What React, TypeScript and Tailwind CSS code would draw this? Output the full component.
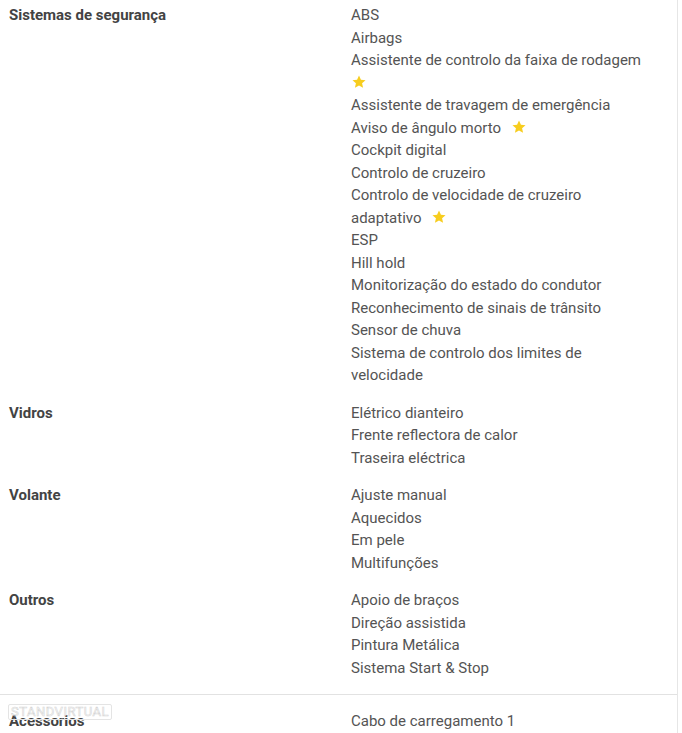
type Item = { text: string; star?: boolean }

const sections: { title: string; items: Item[] }[] = [
  {
    title: 'Sistemas de segurança',
    items: [
      { text: 'ABS' },
      { text: 'Airbags' },
      { text: 'Assistente de controlo da faixa de rodagem', star: true },
      { text: 'Assistente de travagem de emergência' },
      { text: 'Aviso de ângulo morto', star: true },
      { text: 'Cockpit digital' },
      { text: 'Controlo de cruzeiro' },
      { text: 'Controlo de velocidade de cruzeiro adaptativo', star: true },
      { text: 'ESP' },
      { text: 'Hill hold' },
      { text: 'Monitorização do estado do condutor' },
      { text: 'Reconhecimento de sinais de trânsito' },
      { text: 'Sensor de chuva' },
      { text: 'Sistema de controlo dos limites de velocidade' },
    ],
  },
  {
    title: 'Vidros',
    items: [
      { text: 'Elétrico dianteiro' },
      { text: 'Frente reflectora de calor' },
      { text: 'Traseira eléctrica' },
    ],
  },
  {
    title: 'Volante',
    items: [
      { text: 'Ajuste manual' },
      { text: 'Aquecidos' },
      { text: 'Em pele' },
      { text: 'Multifunções' },
    ],
  },
  {
    title: 'Outros',
    items: [
      { text: 'Apoio de braços' },
      { text: 'Direção assistida' },
      { text: 'Pintura Metálica' },
      { text: 'Sistema Start & Stop' },
    ],
  },
]

function Star() {
  return (
    <svg viewBox="0 0 24 24" className="inline-block h-[16px] w-[16px] align-[-2px]">
      <path
        d="M12 2.2l2.9 6.3 6.9.7-5.2 4.6 1.5 6.8L12 17.1l-6.1 3.5 1.5-6.8-5.2-4.6 6.9-.7z"
        fill="#f7cd1e"
      />
    </svg>
  )
}

function Row({ title, items }: { title: string; items: Item[] }) {
  return (
    <div className="mb-[15px] flex">
      <div className="w-[351px] shrink-0 pl-[9px] font-bold text-[#434343]">{title}</div>
      <ul className="w-[294px] text-[#545454]">
        {items.map((item) => (
          <li key={item.text}>
            {item.text}
            {item.star && (
              <>
                <span className="[word-spacing:6px]"> </span>
                <Star />
              </>
            )}
          </li>
        ))}
      </ul>
    </div>
  )
}

export default function App() {
  return (
    <div className="min-h-[733px] w-[682px] bg-white font-['Roboto',sans-serif] text-[15px] leading-[22.5px]">
      <div className="min-h-[733px] w-[678px] border-r border-[#e6e6e6] pt-[4px]">
        {sections.map((s) => (
          <Row key={s.title} title={s.title} items={s.items} />
        ))}
        <div className="relative border-t border-[#e2e2e2] pt-[15px]">
          <div className="flex">
            <div className="w-[351px] shrink-0 pl-[9px] font-bold text-[#434343]">Acessorios</div>
            <ul className="w-[294px] text-[#545454]">
              <li>Cabo de carregamento 1</li>
            </ul>
          </div>
          <div className="absolute left-[8px] top-[9px] rounded-[2px] border border-[#e4e4e4] px-[2px] text-[13px] leading-[14px] tracking-[0.5px] text-transparent [-webkit-text-stroke:0.6px_#d6d6d6]">
            STANDVIRTUAL
          </div>
        </div>
      </div>
    </div>
  )
}
